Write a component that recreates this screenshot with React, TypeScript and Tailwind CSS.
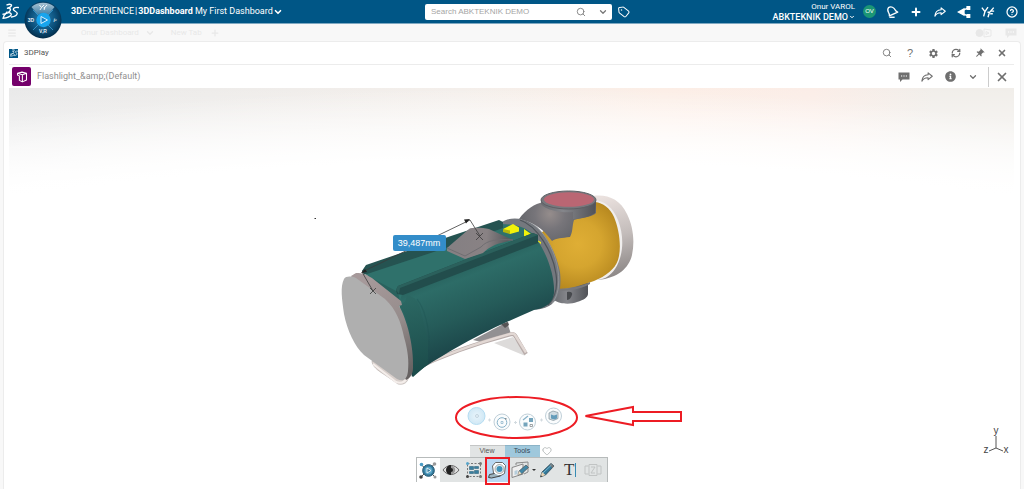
import type { ReactNode } from 'react';
import {
  ChevronDown,
  CircleHelp,
  Heart,
  Menu,
  Plus,
  RefreshCw,
  Search,
  Tag,
  X,
} from 'lucide-react';
import { FaInfoCircle } from 'react-icons/fa';
import { MdPushPin, MdSettings } from 'react-icons/md';
import { clsx } from 'clsx';

function IconButton({ label, className, children }: { label: string; className?: string; children: ReactNode }) {
  return (
    <button aria-label={label} className={clsx('flex h-4 w-4 shrink-0 items-center justify-center', className)}>
      {children}
    </button>
  );
}

function DsLogo() {
  return (
    <svg viewBox="0 0 17 17" className="h-[17px] w-[17px]" fill="none" stroke="currentColor" strokeWidth="1.4" strokeLinecap="round" strokeLinejoin="round">
      <path d="M5 1.800c2.500-.8 4.700-.6 4.500.6-.2 1.200-2.300 2.300-4 2.800 2.300-.2 3.400.5 2.800 2C7.300 9.200 4.500 10.800 1 11.200" />
      <path d="M5 9C3.500 10.500 1.500 13 1 15.300c3-.3 6.800-1.300 8-3.100.8-1.300-.4-2.400-2.400-2.600" />
      <path d="M16.300 4.500c-2.200-.5-5 .3-5 1.800 0 1.700 4.200 2.300 3.900 4.200-.3 1.900-3 3.100-5.700 3.500" />
    </svg>
  );
}

function ShareArrow() {
  return (
    <svg viewBox="0 0 16 16" className="h-3 w-3" fill="none" stroke="currentColor" strokeWidth="1.500" strokeLinejoin="round">
      <path d="M9.500 2.500 15 7l-5.500 4.500V9C5.500 8.800 3 10.300 1.200 13.500 1.500 8.500 4.500 5.300 9.500 5z" />
    </svg>
  );
}

function CommentBubble() {
  return (
    <svg viewBox="0 0 12 12" className="h-3 w-3">
      <path d="M.5 1.500h11v7H4.500L2 11V8.500H.5z" fill="currentColor" />
      <path d="M3 5h1.200M5.400 5h1.200M7.800 5H9" stroke="#fff" strokeWidth="1.200" />
    </svg>
  );
}

function Compass() {
  return (
    <button aria-label="Compass" className="absolute left-6 top-0 z-10 h-10 w-10">
      <svg viewBox="0 0 40 40" className="h-10 w-10">
        <defs>
          <radialGradient id="rim" cx="50%" cy="45%" r="55%">
            <stop offset="0" stopColor="#2b84b6" />
            <stop offset=".65" stopColor="#0b4f7a" />
            <stop offset="1" stopColor="#032c49" />
          </radialGradient>
          <linearGradient id="north" x1="0" y1="0" x2="0" y2="1">
            <stop offset="0" stopColor="#a9c3d3" />
            <stop offset="1" stopColor="#3d7ea6" />
          </linearGradient>
        </defs>
        <circle cx="19" cy="20" r="18.500" fill="url(#rim)" />
        <path d="M7.500 7A18 18 0 0 1 30.500 7L24 15a8 8 0 0 0-10 0z" fill="url(#north)" />
        <path d="M9 30l5-5M29 30l-5-5M9 10l5 5M29 10l-5 5" stroke="#3aa0d8" strokeWidth=".8" />
        <circle cx="19.500" cy="20" r="7.200" fill="#18a5ee" />
        <path d="M17 16.500 23.500 20 17 23.500z" fill="#1684c9" stroke="#d9f2ff" strokeWidth="1" />
        <g fill="#e6eff5" fontFamily="Liberation Sans, sans-serif" fontWeight="700" textAnchor="middle">
          <text x="7" y="22" fontSize="5">3D</text>
          <text x="19" y="33" fontSize="5">V,R</text>
          <text x="31" y="22" fontSize="5" fontStyle="italic">i²</text>
        </g>
        <path d="M15.500 5l2 2.500L20 5M17.500 7.500 16 10M19.500 8l1.500-.8L23 5M21 7.500 20 10" stroke="#fff" strokeWidth=".9" fill="none" />
      </svg>
    </button>
  );
}

function TopBar() {
  return (
    <header className="relative flex h-6 items-center border-b border-[#7fa9c2] bg-[#005686] pl-0.5 pr-1 text-white">
      <a href="#home" aria-label="Home">
        <DsLogo />
      </a>
      <Compass />
      <div className="ml-[52px] flex items-center whitespace-nowrap font-[Roboto,sans-serif] text-[9px]">
        <span><b>3D</b>EXPERIENCE</span>
        <span className="mx-px">|</span>
        <b>3DDashboard</b>
        <button className="ml-0.5 flex items-center">
          My First Dashboard
          <ChevronDown className="h-2.5 w-2.5" strokeWidth={4} />
        </button>
      </div>

      <div className="absolute left-[425px] top-1 flex items-center">
        <form className="flex h-4 w-[187px] items-center rounded-xs bg-white pl-1.5 pr-1 text-[#777]">
          <input
            aria-label="Search"
            placeholder="Search ABKTEKNIK DEMO"
            className="w-0 flex-1 font-['Liberation_Sans',sans-serif] text-[8px] outline-none placeholder:text-[#a5a5a5]"
          />
          <Search className="mr-3 h-2.5 w-2.5" strokeWidth={2} />
          <ChevronDown className="h-2.5 w-2.5" strokeWidth={3} />
        </form>
        <IconButton label="Tags" className="ml-1">
          <Tag className="h-3 w-3 -rotate-6" strokeWidth={2} />
        </IconButton>
      </div>

      <div className="ml-auto flex items-center gap-2">
        <div className="flex flex-col items-end font-[Roboto,sans-serif]">
          <span className="text-[8px] leading-[10px]">Onur VAROL</span>
          <button className="flex items-center text-[9px] leading-[10px] font-medium">
            ABKTEKNIK DEMO
            <ChevronDown className="ml-px h-1.5 w-1.5" strokeWidth={4} />
          </button>
        </div>
        <span className="flex h-[13px] w-[13px] items-center justify-center rounded-full bg-[#1b9675] font-['Liberation_Sans',sans-serif] text-[6px]">
          OV
        </span>
        <IconButton label="Notifications">
          <svg viewBox="0 0 16 16" className="h-3.5 w-3.5" fill="none" stroke="currentColor" strokeWidth="1.500" strokeLinejoin="round">
            <path d="M4 3C7 1 10.500 3 11.500 5.500c.5 1.500 1.500 2 3 2.700L5 12.500c.3-2-.2-2.500-1-4C3 6.500 2.800 4.500 4 3z" />
            <path d="M5 14h6" strokeWidth="1.600" />
          </svg>
        </IconButton>
        <IconButton label="Add"><Plus className="h-3 w-3" strokeWidth={4} /></IconButton>
        <IconButton label="Share"><ShareArrow /></IconButton>
        <IconButton label="Network">
          <svg viewBox="0 0 16 16" className="h-3.5 w-3.5" fill="currentColor" stroke="currentColor" strokeWidth="1.500">
            <path d="M13 3 3.500 8 13 13" fill="none" />
            <path d="M1.500 8 8 4.500v7z" />
            <path d="M11.500 2h3v3h-3zM11.500 11h3v3h-3z" />
          </svg>
        </IconButton>
        <IconButton label="Community">
          <svg viewBox="0 0 16 16" className="h-3.5 w-3.5" fill="none" stroke="currentColor" strokeWidth="1.600">
            <path d="M1 3l3.500 4.500L8 2.500M4.500 7.500 3 13M7.500 8l2 .8L14.500 3M11.500 7h3.500M9.500 9 8 14M10.500 10h3" />
          </svg>
        </IconButton>
        <IconButton label="Help"><CircleHelp className="h-3 w-3" strokeWidth={2.500} /></IconButton>
      </div>
    </header>
  );
}

function TabBar() {
  return (
    <nav className="flex h-[17px] items-center px-[7px] pt-px font-[Roboto,sans-serif] text-[8px] text-[#e8e8e8]">
      <Menu className="h-2.5 w-2.5" strokeWidth={3} />
      <a href="#onur" className="ml-16">Onur Dashboard</a>
      <ChevronDown className="ml-1.5 h-2.5 w-2.5" strokeWidth={3} />
      <a href="#new" className="ml-4">New Tab</a>
      <Plus className="ml-2 h-2.5 w-2.5" strokeWidth={3} />
      <svg viewBox="0 0 18 10" className="ml-auto mr-3 h-2.5 w-[18px]" fill="none" stroke="currentColor">
        <circle cx="4.500" cy="5" r="3.500" fill="currentColor" />
        <path d="M9 1l7 1v6l-7 1zM11 3.500 14 5l-3 1.500z" />
      </svg>
      <CommentBubble />
    </nav>
  );
}

function WidgetHeader() {
  return (
    <div className="flex h-[23px] items-center justify-between border-b border-[#ececec] text-[#6f6f6f]">
      <div className="flex items-center font-[Roboto,sans-serif] text-[8px] text-[#555]">
        <span className="flex h-[9px] w-[9px] items-center justify-center bg-[#005686] text-white [&_svg]:h-2 [&_svg]:w-2">
          <DsLogo />
        </span>
        <span className="ml-1.5">3DPlay</span>
      </div>
      <div className="flex items-center gap-[7px] pr-1">
        <IconButton label="Search"><Search className="h-2.5 w-2.5" strokeWidth={2} /></IconButton>
        <IconButton label="Help" className="font-['Liberation_Sans',sans-serif] text-[11px]">?</IconButton>
        <IconButton label="Settings"><MdSettings className="h-[11px] w-[11px]" /></IconButton>
        <IconButton label="Refresh"><RefreshCw className="h-2.5 w-2.5" strokeWidth={3} /></IconButton>
        <IconButton label="Pin"><MdPushPin className="h-[11px] w-[11px] rotate-45" /></IconButton>
        <IconButton label="Close"><X className="h-2.5 w-2.5" strokeWidth={4} /></IconButton>
      </div>
    </div>
  );
}

function DocumentHeader() {
  return (
    <div className="flex h-[23px] items-center justify-between text-[#6f6f6f]">
      <div className="flex items-center pl-[3px] font-[Roboto,sans-serif] text-[9px] text-[#8f8f8f]">
        <span className="flex h-[19px] w-[19px] items-center justify-center rounded-xs bg-[#74006b] text-white">
          <svg viewBox="0 0 16 16" className="h-3 w-3" fill="none" stroke="currentColor" strokeWidth="1.400" strokeLinejoin="round">
            <path d="M2 3 8 1.500 14 3 8.500 5zM2 3v2.500l2.500 1v6l4 2V5M14 3v9l-5.500 2.500" />
          </svg>
        </span>
        <span className="ml-1.5">Flashlight_&amp;amp;(Default)</span>
      </div>
      <div className="flex items-center gap-[7px] pr-1">
        <IconButton label="Comments"><CommentBubble /></IconButton>
        <IconButton label="Share"><ShareArrow /></IconButton>
        <IconButton label="Information"><FaInfoCircle className="h-[11px] w-[11px]" /></IconButton>
        <IconButton label="More"><ChevronDown className="h-2.5 w-2.5" strokeWidth={3} /></IconButton>
        <IconButton label="Close document" className="relative ml-1.5 before:absolute before:-left-1.5 before:h-5 before:w-px before:bg-[#ccc]">
          <X className="h-3.5 w-3.5" strokeWidth={3} />
        </IconButton>
      </div>
    </div>
  );
}

function FlashlightModel() {
  return (
    <svg viewBox="300 180 340 212" className="absolute left-1/2 top-[93px] -ml-[211px] h-[212px] w-[340px]">
      <defs>
        <linearGradient id="body" gradientUnits="userSpaceOnUse" x1="455" y1="262" x2="486" y2="342">
          <stop offset="0" stopColor="#265e5a" />
          <stop offset=".2" stopColor="#2d6c67" />
          <stop offset=".6" stopColor="#255b59" />
          <stop offset="1" stopColor="#1b4448" />
        </linearGradient>
        <linearGradient id="collar" gradientUnits="userSpaceOnUse" x1="405" y1="300" x2="424" y2="372">
          <stop offset="0" stopColor="#2b6762" />
          <stop offset="1" stopColor="#1b4b4a" />
        </linearGradient>
        <linearGradient id="edge" gradientUnits="userSpaceOnUse" x1="365" y1="280" x2="410" y2="370">
          <stop offset="0" stopColor="#a6999a" />
          <stop offset=".5" stopColor="#958c8b" />
          <stop offset="1" stopColor="#666262" />
        </linearGradient>
        <radialGradient id="lens" gradientUnits="userSpaceOnUse" cx="577" cy="243" r="52">
          <stop offset="0" stopColor="#dfae35" />
          <stop offset=".45" stopColor="#d5a52f" />
          <stop offset="1" stopColor="#b0821c" />
        </radialGradient>
        <linearGradient id="cap" gradientUnits="userSpaceOnUse" x1="605" y1="195" x2="628" y2="275">
          <stop offset="0" stopColor="#eae1de" />
          <stop offset=".5" stopColor="#c3bcba" />
          <stop offset="1" stopColor="#888382" />
        </linearGradient>
        <radialGradient id="hinge" gradientUnits="userSpaceOnUse" cx="549" cy="213" r="30">
          <stop offset="0" stopColor="#958d8c" />
          <stop offset=".5" stopColor="#77757a" />
          <stop offset="1" stopColor="#66676c" />
        </radialGradient>
        <linearGradient id="knob" x1="0" y1="0" x2="1" y2="0">
          <stop offset="0" stopColor="#686a6f" />
          <stop offset=".4" stopColor="#85868b" />
          <stop offset="1" stopColor="#505257" />
        </linearGradient>
        <linearGradient id="lever" gradientUnits="userSpaceOnUse" x1="455" y1="240" x2="505" y2="244">
          <stop offset="0" stopColor="#858083" />
          <stop offset=".6" stopColor="#898284" />
          <stop offset="1" stopColor="#5c5c60" />
        </linearGradient>
      </defs>

      {/* stand */}
      <path d="M371 360c0 5 5 9 13 14l13 9c5 1 9-1 10-5l5-6z" fill="#d9d0cc" stroke="#b6aeab" strokeWidth=".6" />
      <path d="M372 363l23 18c6 2 9 0 11-4" fill="none" stroke="#f4eeeb" strokeWidth="2" />
      <path d="M472 339l34-18 4 12-30 8z" fill="#929092" />
      <path d="M500 323l7-2 1 3-4 3z" fill="#565455" />
      <path d="M493 342l19-6 13 16c0 2-1 3-3 2z" fill="#dddbda" />
      <path d="M412 369C446 352 480 341 511 333c2 0 3 1 4 3l10 17" fill="none" stroke="#b8acaa" strokeWidth="4" strokeLinejoin="round" />
      <path d="M412 369C446 352 480 341 511 332.500c2 0 3 1 4 3l10 16" fill="none" stroke="#e2d8d4" strokeWidth="2.500" strokeLinejoin="round" />

      {/* head: white cap, yellow barrel, lower hinge */}
      <path d="M592 195c14-2 27 3 34 18 6 12 8 27 5 41-3 13-14 23-34 25z" fill="url(#cap)" />
      <path d="M590 199c12-1 22 7 27 20 7 18 5 37-3 49-5 7-10 10-17 11z" fill="#f0eeed" />
      <path d="M552 288v10c4 5 17 6 24 3 7-2 11-5 11-8v-16z" fill="url(#knob)" />
      <path d="M566 291c4-1 6 1 5 3s-2 5-5 5z" fill="#47494d" />
      <path d="M540 232c17-13 33-27 54-31 8 1 15 6 19 15 5 12 8 30 4 43-3 9-12 16-24 21-14 5-27 8-36 8z" fill="url(#lens)" />
      <path d="M557 288c14 0 24-3 32-7v2c-7 4-18 7-32 7z" fill="#77787c" />

      {/* locking ring */}
      <path d="M499 222c9-6 20-6 31 0 14 8 25 29 29 49 2 18-2 29-11 34-6 3-11 4-17 3z" fill="#74787e" />
      <path d="M519 219c18 6 33 33 36 54 2 14-1 24-8 31" fill="none" stroke="#4e5359" strokeWidth="1.200" />
      <path d="M526 219c16 8 28 30 31 50 2 15 0 26-6 33" fill="none" stroke="#96999e" strokeWidth=".8" />

      {/* upper hinge */}
      <path d="M518 218c7-10 16-15 24-17l-1-3 54 1v13c-3 4-13 4-22 7-2 6-1 12-4 17-8 1-14 1-18 4-10-14-20-19-33-22z" fill="url(#hinge)" />
      <path d="M540 199v4c5 7 23 9 32 8v7c9 0 18-3 22-6l1-13z" fill="url(#knob)" />
      <ellipse cx="567.500" cy="199" rx="27.500" ry="9" fill="#77787d" stroke="#5d5f64" />
      <ellipse cx="568" cy="198.500" rx="25" ry="7.200" fill="#ba6673" />

      {/* body */}
      <path d="M361 270l4-5 133-42c14 0 26 2 36 12l-134 69z" fill="#2f716b" />
      <path d="M361 270l4-6 85-29 48-16 4 2v6l-30 11-109 36z" fill="#255351" />
      <path d="M365 274l32 17 2 11c-10-11-25-21-38-28z" fill="#2a625e" />
      <path d="M502 228l10-5 6 3.500v4l-9 2.500zM523 228l7 5v3.500h-7zM534 238l6 3v2z" fill="#f2f20a" />
      <path d="M502 228l7 1.500v3.500l-7-2z" fill="#b5b60c" />
      <path d="M398 303l3-10 135-54c11 15 18 38 17 53-1 9-7 15-20 17-28 12-54 24-80 39-15 9-30 17-42 28z" fill="url(#body)" />
      <path d="M398 304c5-1 7-4 8-10 8 2 12 6 14 17l7 28v24l-15 13c1-30-2-55-14-72z" fill="url(#collar)" />
      <path d="M416 298c10 13 15 40 11 65" fill="none" stroke="#1d504f" strokeWidth="1.200" opacity=".35" />
      <path d="M395 289l2-4 135-53 5 2v8l-135 52-6-1z" fill="#224d4c" />
      <path d="M395 289l2-4 135-53 5 2-138 53-1 6z" fill="#2b605c" />
      <path d="M446 247l22-19c4-2 14-1 20 0l24 11-12 3c-8 2-14 6-18 10l-18 6-18-8z" fill="url(#lever)" />
      <path d="M446 247l18 8 16-9c6-7 16-8 32-7" fill="none" stroke="#706e72" />

      {/* end cap */}
      <path d="M350 275l5-3c7 0 11 2 16 5l29 23 1 4-3 1c8 13 15 41 14 62 0 6-3 10-7 12z" fill="url(#edge)" />
      <path d="M343 278c2-3 7-3 12-1l29 21c11 10 16 23 19 38 4 14 5 24 4 34-1 9-5 11-11 8l-33-24c-9-8-17-25-20-41-2-15-4-27 0-35z" fill="#afafaf" />

      {/* measurement */}
      <g fill="none" stroke="#3b3b3b" strokeWidth=".8">
        <path d="M361 271 469 219l10 16M361 271l11 19" />
        <path d="M475 232l7 7m0-7-7 7M369 287l6 6m0-6-6 6" />
      </g>
      <path d="M469 218l-6 .5 2 4zM360 272l6-1-2-3z" fill="#222" />
      <path d="M313.500 217h1.500v1h-1.500z" fill="#333" />
    </svg>
  );
}

function RadialMenu() {
  return (
    <svg viewBox="450 390 236 52" className="absolute bottom-[47px] left-1/2 -ml-[62px] h-[52px] w-[236px]">
      <defs>
        <radialGradient id="bubble">
          <stop offset="0" stopColor="#e9f4fb" />
          <stop offset="1" stopColor="#d0e8f5" />
        </radialGradient>
      </defs>
      <circle cx="476.500" cy="416" r="8.500" fill="url(#bubble)" stroke="#b5ddf2" />
      <circle cx="477" cy="416" r="1.500" fill="none" stroke="#b4c7d2" strokeWidth=".7" />
      <g fill="#fafcfd" stroke="#b9cad4" strokeWidth=".9">
        <circle cx="502" cy="422" r="8" />
        <circle cx="527.500" cy="422" r="8" />
        <circle cx="553.500" cy="416" r="8" />
      </g>
      <g fill="none" stroke="#87b1c8">
        <circle cx="502" cy="422.500" r="4.800" />
        <path d="M501 421.500h2v2h-2z" strokeWidth=".7" />
        <path d="M523 420l5-4" strokeWidth="1.200" />
      </g>
      <path d="M505 418h1.500v1.500H505z" fill="#8a8f92" />
      <path d="M523.500 422.500h4v4h-4zM529 418h4v4h-4z" fill="#74a4bc" />
      <path d="M530 424.500h2.500v2H530z" fill="none" stroke="#8a8f92" strokeWidth=".8" />
      <path d="M549 413l4-2 5 1.500v6l-4.500 2-4.500-1.500z" fill="#d3dee4" stroke="#82929b" strokeWidth=".7" />
      <path d="M551 414.500l3 1v4l-3-1zM554 415.500l3-1v4l-3 1z" fill="#649cba" />
      <path d="M489.500 418.500v3M488 420h3M515.500 421v3M514 422.500h3M541.500 418.500v3M540 420h3" stroke="#d3dbe0" />
      <ellipse cx="516.500" cy="417.500" rx="60.500" ry="20.500" fill="none" stroke="#ed1c24" strokeWidth="2" />
      <path d="M585.500 416 633 407v5h48v9h-48v4z" fill="none" stroke="#ed1c24" strokeWidth="2" />
    </svg>
  );
}

const TOOLS: { label: string; icon: ReactNode; className?: string }[] = [
  {
    label: 'Play',
    className: 'bg-white',
    icon: (
      <>
        <path d="M2.500 4 7 8M15 3l-3 4M2 16l4-4M16 16l-3-3" stroke="#555" />
        <circle cx="9.500" cy="9.500" r="5.800" fill="#377d9e" stroke="#1d536f" />
        <circle cx="9.500" cy="9.500" r="3.800" fill="#5ba6c8" />
        <path d="M8 7l4 2.500L8 12z" fill="#377d9e" stroke="#fff" strokeWidth=".8" />
        <g fill="#999"><circle cx="2.500" cy="3.500" r="1.800" fill="#4a9bc4" /><circle cx="15.500" cy="3" r="1.800" /><circle cx="2" cy="16" r="1.800" fill="#444" /><circle cx="16" cy="16" r="1.500" /></g>
      </>
    ),
  },
  {
    label: 'Visibility',
    icon: (
      <>
        <path d="M1 9c4-6 12-6 16 0-4 6-12 6-16 0z" fill="#ddd" stroke="#666" />
        <circle cx="9" cy="9" r="4.200" fill="#999" />
        <path d="M9 4a5 5 0 0 0 0 10z" fill="#222" />
        <circle cx="9" cy="9" r="2" fill="#222" />
      </>
    ),
  },
  {
    label: 'Select',
    icon: (
      <>
        <path d="M2.500 2.500h13v13h-13z" stroke="#777" strokeDasharray="2 1.500" />
        <path d="M4.500 5.500h4v3h-4zM9.500 5.500h4v2h-4zM4.500 10.500h4v2h-4zM9.500 9.500h4v3h-4z" fill="#397f9f" stroke="#1f5671" strokeWidth=".5" />
        <g fill="#777"><circle cx="2.500" cy="2.500" r="1.500" fill="#57a6cc" /><circle cx="15.500" cy="2.500" r="1.500" /><circle cx="2.500" cy="15.500" r="1.500" fill="#444" /><circle cx="15.500" cy="15.500" r="1.500" /></g>
      </>
    ),
  },
  {
    label: 'Measure',
    className: 'bg-[#b9d8f2]',
    icon: (
      <>
        <path d="M4.500 5 7.500 1.500h7l3 3-1 8-3.500 2H8L5.500 12z" fill="#fff" stroke="#666" />
        <circle cx="11.500" cy="8" r="4.500" fill="#e6edf0" stroke="#888" strokeWidth=".7" />
        <circle cx="11.500" cy="8" r="3" fill="#3f92b8" />
        <path d="M6.500 12.500 1.500 13.500.5 16.500l3 .5 9-2" fill="#9db3be" stroke="#444" />
      </>
    ),
  },
  {
    label: 'Section',
    icon: (
      <>
        <path d="M1 6.500 12 3v10L1 16.500z" fill="#efefef" stroke="#888" />
        <path d="M5 4V2l12-1v10l-4 2" stroke="#888" />
        <path d="M3.500 10l3-1v4l-3 1z" fill="#b5cddb" />
        <path d="M7 14l1-4 7-6 2.500 2.500-6.500 6z" fill="#4387a6" stroke="#444" strokeWidth=".6" />
        <path d="M7 14l1-4 2.500 2.500z" fill="#f3dfc1" />
      </>
    ),
  },
  {
    label: 'Pencil',
    icon: (
      <>
        <path d="M2.500 16l1.500-5L13 2.500 16 5l-8.500 9z" fill="#327898" stroke="#2c4654" strokeWidth=".8" />
        <path d="M11.500 4l3 3 1.500-2-3-2.500z" fill="#777" />
        <path d="M5 12l8.500-8" stroke="#79b8d3" />
        <path d="M2.500 16l1.500-5 3.500 3z" fill="#e9d3b4" />
        <path d="M2.500 16l.5-1.800 1.200 1.200z" fill="#222" />
      </>
    ),
  },
  {
    label: 'Text',
    icon: (
      <>
        <text x="3" y="14" fontSize="17" fill="#333" fontFamily="Liberation Serif, serif">T</text>
        <path d="M14.500 2v14" stroke="#368cb5" />
      </>
    ),
  },
  {
    label: 'Slides',
    icon: (
      <g stroke="#c1c4c4">
        <path d="M5 3.500h8v11H5zM4.500 5H1v8h3.500M13.500 5H17v8h-3.500" />
        <path d="M7 6h4l-4 6h4" />
      </g>
    ),
  },
];

function Dock() {
  return (
    <div className="relative mx-auto mt-auto mb-[7px] w-48 font-['Liberation_Sans',sans-serif]">
      <div className="flex h-3 items-center pl-[54px] text-[7px] text-[#555]" role="tablist">
        <button role="tab" className="h-3 w-[35px] border-t border-[#c4c6c6] bg-[#e1e4e4]">View</button>
        <button role="tab" aria-selected className="h-3 w-[35px] border-t border-[#8bb3c7] bg-[#9fc8dc] text-[#345]">Tools</button>
        <Heart className="ml-0.5 h-2.5 w-2.5 text-[#b0b5b5]" strokeWidth={2} />
      </div>
      <div className="flex h-[25px] items-center border border-[#b7bbbb] border-b-0 bg-[#e1e4e4]">
        {TOOLS.map((tool) => (
          <button
            key={tool.label}
            aria-label={tool.label}
            className={clsx('relative flex h-6 w-[23px] shrink-0 items-center justify-center', tool.className, tool.label === 'Pencil' && 'ml-1')}
          >
            <svg viewBox="0 0 18 18" className="h-[18px] w-[18px]" fill="none">{tool.icon}</svg>
            {tool.label === 'Section' && (
              <span className="absolute -right-1 h-0 w-0 border-x-2 border-t-2 border-x-transparent border-t-[#333]" />
            )}
            {tool.label === 'Measure' && <span className="absolute -inset-x-px -top-px -bottom-[3px] border-2 border-[#ed1c24]" />}
          </button>
        ))}
      </div>
    </div>
  );
}

function AxisTriad() {
  return (
    <svg viewBox="0 0 28 28" className="absolute bottom-[35px] right-1 h-7 w-7">
      <path d="M14 10v12l-7 3M14 22l7 3" fill="none" stroke="#555" />
      <g fill="#444" fontFamily="Liberation Sans, sans-serif" fontSize="10" textAnchor="middle">
        <text x="14" y="8">y</text>
        <text x="4" y="27">z</text>
        <text x="24" y="27">x</text>
      </g>
    </svg>
  );
}

function Viewer() {
  return (
    <main className="relative flex min-h-[400px] flex-1 flex-col overflow-hidden bg-[radial-gradient(ellipse_130%_100%_at_50%_100%,#fff_82%,transparent),linear-gradient(180deg,transparent,#fff_110px),linear-gradient(90deg,#e9e9e9,#eeecea_20%,#f4efeb_45%,#fceee6_65%,#fbede7_80%,#f1eeea_92%)]">
      <FlashlightModel />
      <div className="absolute left-1/2 top-[147px] -ml-[119px] w-[53px] rounded-xs bg-[#338dc9] text-center font-['Liberation_Sans',sans-serif] text-[9px] leading-4 text-white">
        39,487mm
      </div>
      <RadialMenu />
      <AxisTriad />
      <Dock />
    </main>
  );
}

export default function App() {
  return (
    <div className="flex min-h-screen flex-col bg-[#f8f8f8]">
      <TopBar />
      <TabBar />
      <section className="mx-[3px] flex flex-1 flex-col rounded-t-sm border-x border-t border-[#ececec] bg-white pl-[5px] pr-1.5">
        <WidgetHeader />
        <DocumentHeader />
        <Viewer />
      </section>
    </div>
  );
}
